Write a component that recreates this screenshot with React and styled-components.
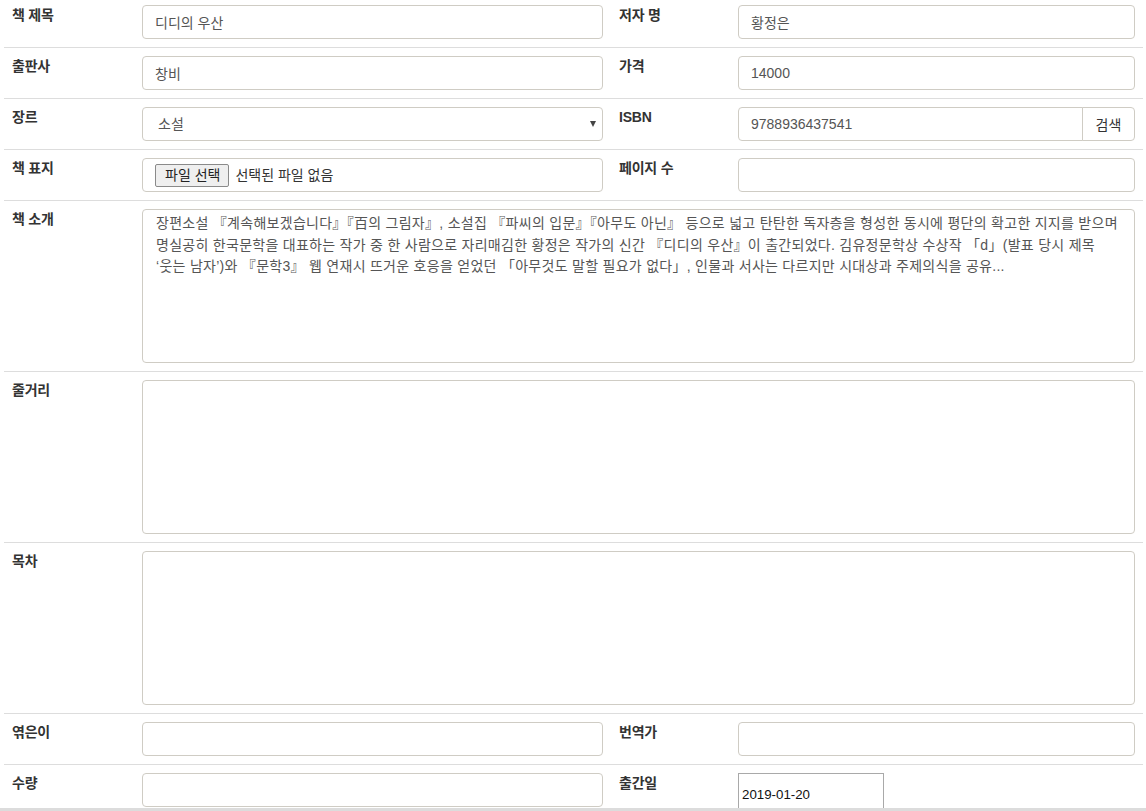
import React from "react";
import styled, { createGlobalStyle } from "styled-components";

const Global = createGlobalStyle`
  html, body {
    margin: 0;
    padding: 0;
    background: #fff;
    overflow: hidden;
  }
  body {
    font-family: "Liberation Sans", "Noto Sans CJK KR", sans-serif;
    font-size: 14px;
    line-height: 20px;
    color: #333;
  }
  * { box-sizing: border-box; }
`;

const Table = styled.div`
  margin: -4px 0 0 4px;
  width: 1139px;
`;

const Row = styled.div`
  display: grid;
  grid-template-columns: 130px 477px 119px 413px;
  border-top: 1px solid #ddd;
`;

const Cell = styled.div`
  padding: 8px;
  grid-column: ${(p) => (p.$span ? `span ${p.$span}` : "auto")};
  position: relative;
`;

const Label = styled.div`
  font-weight: bold;
  font-size: 14px;
  line-height: 20px;
  color: #333;
  letter-spacing: -0.2px;
`;

const Input = styled.input`
  display: block;
  width: 100%;
  height: 34px;
  padding: 6px 12px;
  font-family: inherit;
  font-size: 14px;
  line-height: 20px;
  color: #555;
  background: #fff;
  border: 1px solid #cfccc4;
  border-radius: ${(p) => (p.$group ? "4px 0 0 4px" : "4px")};
  outline: none;
`;

const SelectWrap = styled.div`
  position: relative;
`;

const Select = styled.select`
  display: block;
  width: 100%;
  height: 34px;
  padding: 6px 12px 6px 15px;
  font-family: inherit;
  font-size: 14px;
  color: #555;
  background: #fff;
  border: 1px solid #cfccc4;
  border-radius: 4px;
  appearance: none;
  outline: none;
`;

const Arrow = styled.span`
  position: absolute;
  right: 7px;
  top: 14px;
  width: 0;
  height: 0;
  border-left: 3.5px solid transparent;
  border-right: 3.5px solid transparent;
  border-top: 6px solid #444;
  pointer-events: none;
`;

const Group = styled.div`
  display: flex;
`;

const AddonButton = styled.button`
  flex: 0 0 53px;
  height: 34px;
  margin-left: -1px;
  padding: 0;
  font-family: inherit;
  font-size: 14px;
  color: #333;
  background: #fff;
  border: 1px solid #cfccc4;
  border-radius: 0 4px 4px 0;
`;

const FileBox = styled.div`
  display: flex;
  align-items: center;
  gap: 6px;
  height: 34px;
  padding: 0 12px;
  border: 1px solid #cfccc4;
  border-radius: 4px;
  background: #fff;
`;

const FileButton = styled.button`
  height: 23px;
  padding: 0 8px 0 9px;
  font-family: inherit;
  font-size: 14px;
  line-height: 20px;
  color: #222;
  background: #efefef;
  border: 1px solid #8a8a8a;
  border-radius: 2px;
`;

const FileText = styled.span`
  font-size: 14px;
  color: #333;
`;

const TextArea = styled.textarea`
  display: block;
  width: 100%;
  height: 154px;
  padding: 3px 12px 6px 13px;
  font-family: inherit;
  font-size: 14px;
  line-height: 21.5px;
  letter-spacing: ${(p) => p.$ls || "0px"};
  color: #555;
  background: #fff;
  border: 1px solid #cfccc4;
  border-radius: 4px;
  resize: none;
  outline: none;
  white-space: pre;
  overflow: hidden;
`;

const DateInput = styled.input`
  display: block;
  width: 146px;
  height: 42px;
  padding: 0 3px;
  font-family: "Liberation Sans", sans-serif;
  font-size: 13.3px;
  color: #111;
  background: #fff;
  border: 1px solid #a9a9a9;
  border-radius: 0;
  outline: none;
`;

const BottomBar = styled.div`
  position: fixed;
  left: 0;
  right: 0;
  bottom: 0;
  height: 3px;
  background: #dcdcdc;
`;

const intro =
  "장편소설 『계속해보겠습니다』『百의 그림자』, 소설집 『파씨의 입문』『아무도 아닌』 등으로 넓고 탄탄한 독자층을 형성한 동시에 평단의 확고한 지지를 받으며\n" +
  "명실공히 한국문학을 대표하는 작가 중 한 사람으로 자리매김한 황정은 작가의 신간 『디디의 우산』이 출간되었다. 김유정문학상 수상작 「d」(발표 당시 제목\n" +
  "‘웃는 남자’)와 『문학3』 웹 연재시 뜨거운 호응을 얻었던 「아무것도 말할 필요가 없다」, 인물과 서사는 다르지만 시대상과 주제의식을 공유...";

const TextRow = ({ label, value, ls }) => (
  <Row>
    <Cell>
      <Label>{label}</Label>
    </Cell>
    <Cell $span={3}>
      <TextArea value={value} readOnly $ls={ls} />
    </Cell>
  </Row>
);

export default function App() {
  return (
    <>
      <Global />
      <Table>
        <Row>
          <Cell><Label>책 제목</Label></Cell>
          <Cell><Input value="디디의 우산" readOnly /></Cell>
          <Cell><Label>저자 명</Label></Cell>
          <Cell><Input value="황정은" readOnly /></Cell>
        </Row>
        <Row>
          <Cell><Label>출판사</Label></Cell>
          <Cell><Input value="창비" readOnly /></Cell>
          <Cell><Label>가격</Label></Cell>
          <Cell><Input value="14000" readOnly /></Cell>
        </Row>
        <Row>
          <Cell><Label>장르</Label></Cell>
          <Cell>
            <SelectWrap>
              <Select defaultValue="소설">
                <option value="소설">소설</option>
              </Select>
              <Arrow />
            </SelectWrap>
          </Cell>
          <Cell><Label>ISBN</Label></Cell>
          <Cell>
            <Group>
              <Input $group value="9788936437541" readOnly />
              <AddonButton>검색</AddonButton>
            </Group>
          </Cell>
        </Row>
        <Row>
          <Cell><Label>책 표지</Label></Cell>
          <Cell>
            <FileBox>
              <FileButton>파일 선택</FileButton>
              <FileText>선택된 파일 없음</FileText>
            </FileBox>
          </Cell>
          <Cell><Label>페이지 수</Label></Cell>
          <Cell><Input value="" readOnly /></Cell>
        </Row>
        <TextRow label="책 소개" value={intro} ls="0.28px" />
        <TextRow label="줄거리" value="" />
        <TextRow label="목차" value="" />
        <Row>
          <Cell><Label>엮은이</Label></Cell>
          <Cell><Input value="" readOnly /></Cell>
          <Cell><Label>번역가</Label></Cell>
          <Cell><Input value="" readOnly /></Cell>
        </Row>
        <Row>
          <Cell><Label>수량</Label></Cell>
          <Cell><Input value="" readOnly /></Cell>
          <Cell><Label>출간일</Label></Cell>
          <Cell><DateInput value="2019-01-20" readOnly /></Cell>
        </Row>
      </Table>
      <BottomBar />
    </>
  );
}
